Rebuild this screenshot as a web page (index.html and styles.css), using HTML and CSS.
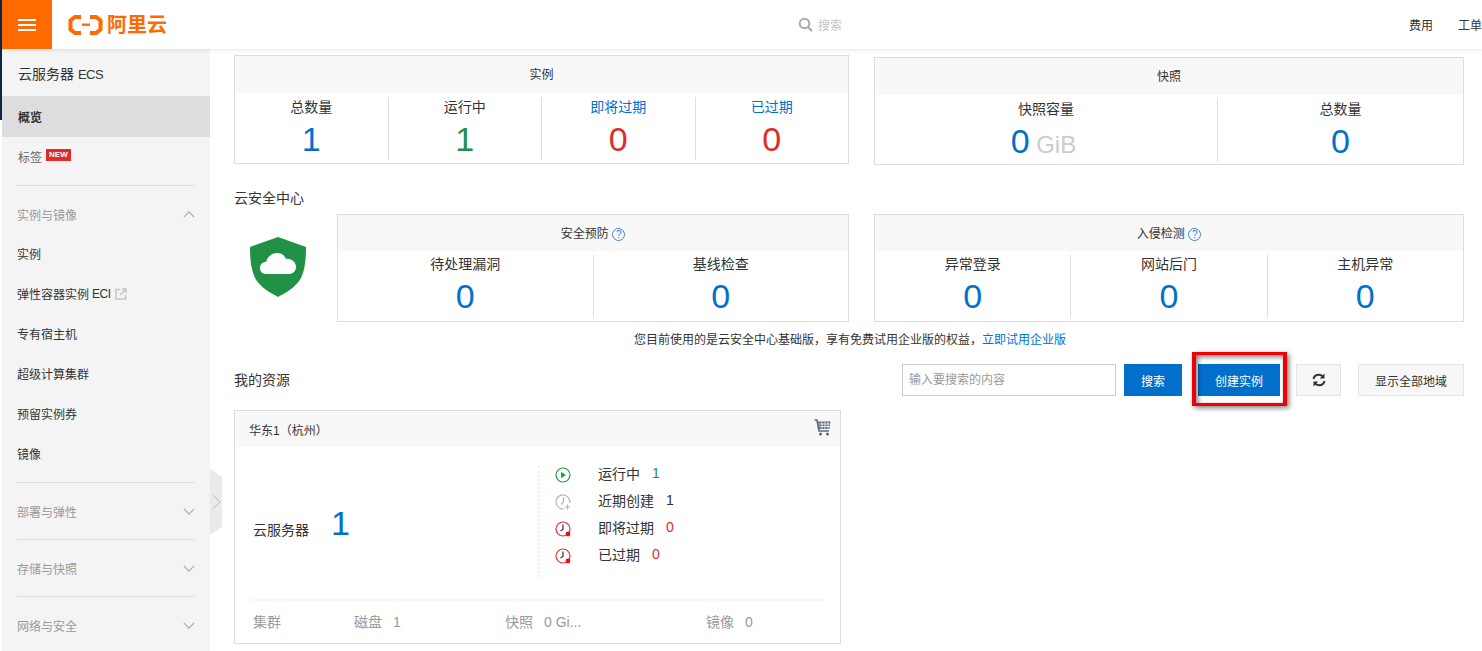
FILE: index.html
```html
<!DOCTYPE html>
<html lang="zh-CN">

<head>
    <meta charset="UTF-8">
    <title>云服务器管理控制台</title>
    <link rel="stylesheet" href="styles.css">
</head>

<body>
    <div class="edge-strip"></div>

    <div class="app">
        <header class="topbar">
            <a class="menu-btn"><span></span><span></span><span></span></a>
            <div class="logo">
                <svg width="35" height="22" viewBox="0 0 35 22">
                    <path d="M13 3H7L2.500 6.500V15.500L7 19H13" fill="none" stroke="#ff6a00" stroke-width="4" />
                    <path d="M22 3H28L32.500 6.500V15.500L28 19H22" fill="none" stroke="#ff6a00" stroke-width="4" />
                    <rect x="14" y="9.500" width="8" height="2.400" fill="#ff6a00" />
                </svg>
                <span>阿里云</span>
            </div>
            <div class="top-search">
                <svg width="15" height="15" viewBox="0 0 15 15">
                    <circle cx="6.500" cy="6.500" r="4.800" fill="none" stroke="#aaa" stroke-width="2" />
                    <path d="M10 10L14 14" stroke="#aaa" stroke-width="2.200" />
                </svg>
                <span>搜索</span>
            </div>
            <nav class="top-links">
                <a>费用</a>
                <a>工单</a>
            </nav>
        </header>

        <div class="body-row">
            <aside class="sidebar">
                <div class="side-title">云服务器 <span class="latin">ECS</span></div>
                <a class="side-item active">概览</a>
                <a class="side-item muted">标签<em class="new-tag">NEW</em></a>

                <div class="side-group open">
                    <div class="group-head">实例与镜像
                        <svg class="chev" width="12" height="7" viewBox="0 0 14 8"><path d="M1 7L7 1L13 7" /></svg>
                    </div>
                    <a class="side-item">实例</a>
                    <a class="side-item">弹性容器实例 <span class="latin">ECI</span>
                        <svg class="ext" width="12" height="12" viewBox="0 0 12 12">
                            <path d="M5 1.500H1V11H10.500V7" fill="none" stroke="#c4c4c4" stroke-width="1.500" />
                            <path d="M5 7L10 2M7 1H11V5" fill="none" stroke="#c4c4c4" stroke-width="1.500" />
                        </svg>
                    </a>
                    <a class="side-item">专有宿主机</a>
                    <a class="side-item">超级计算集群</a>
                    <a class="side-item">预留实例券</a>
                    <a class="side-item">镜像</a>
                </div>

                <div class="side-group">
                    <div class="group-head">部署与弹性
                        <svg class="chev" width="12" height="7" viewBox="0 0 14 8"><path d="M1 1L7 7L13 1" /></svg>
                    </div>
                </div>
                <div class="side-group">
                    <div class="group-head">存储与快照
                        <svg class="chev" width="12" height="7" viewBox="0 0 14 8"><path d="M1 1L7 7L13 1" /></svg>
                    </div>
                </div>
                <div class="side-group">
                    <div class="group-head">网络与安全
                        <svg class="chev" width="12" height="7" viewBox="0 0 14 8"><path d="M1 1L7 7L13 1" /></svg>
                    </div>
                </div>

                <div class="side-toggle">
                    <svg width="9" height="16" viewBox="0 0 9 16"><path d="M1 1L8 8L1 15" fill="none" stroke="#bbb" /></svg>
                </div>
            </aside>

            <main class="content">
                <div class="panel-row first-row">
                    <section class="panel panel-left">
                        <div class="panel-head">实例</div>
                        <div class="stats">
                            <div class="stat"><p>总数量</p><b class="blue">1</b></div>
                            <div class="stat"><p>运行中</p><b class="green">1</b></div>
                            <div class="stat"><p class="link">即将过期</p><b class="red">0</b></div>
                            <div class="stat"><p class="link">已过期</p><b class="red">0</b></div>
                        </div>
                    </section>
                    <section class="panel panel-right">
                        <div class="panel-head">快照</div>
                        <div class="stats">
                            <div class="stat wide"><p>快照容量</p><b class="blue">0 <i class="unit">GiB</i></b></div>
                            <div class="stat"><p>总数量</p><b class="blue">0</b></div>
                        </div>
                    </section>
                </div>

                <h3 class="section-title">云安全中心</h3>
                <div class="panel-row sec-row">
                    <div class="security-wrap">
                        <div class="shield">
                            <svg width="58" height="60" viewBox="0 0 58 60">
                                <path d="M29 0L57 10C57 22 56 33 52 41C47 50 38 55 29 60C20 55 11 50 6 41C2 33 1 22 1 10Z" fill="#219245" />
                                <path d="M17 37C12 37 11 33 11 31C11 27 14 25 17 25C18 20 23 16 28 16C33 16 36 19 37 22C42 21 47 25 47 30C47 34 44 37 40 37Z" fill="#fff" />
                            </svg>
                        </div>
                        <section class="panel panel-sec">
                            <div class="panel-head">安全预防 <span class="help">?</span></div>
                            <div class="stats">
                                <div class="stat"><p>待处理漏洞</p><b class="blue">0</b></div>
                                <div class="stat"><p>基线检查</p><b class="blue">0</b></div>
                            </div>
                        </section>
                    </div>
                    <section class="panel panel-right">
                        <div class="panel-head">入侵检测 <span class="help">?</span></div>
                        <div class="stats">
                            <div class="stat"><p>异常登录</p><b class="blue">0</b></div>
                            <div class="stat"><p>网站后门</p><b class="blue">0</b></div>
                            <div class="stat"><p>主机异常</p><b class="blue">0</b></div>
                        </div>
                    </section>
                </div>
                <p class="notice">您目前使用的是云安全中心基础版，享有免费试用企业版的权益，<a>立即试用企业版</a></p>

                <div class="res-bar">
                    <h3 class="section-title">我的资源</h3>
                    <div class="res-tools">
                        <input class="res-input" type="text" placeholder="输入要搜索的内容">
                        <button class="btn btn-primary">搜索</button>
                        <span class="highlight"><button class="btn btn-primary btn-create">创建实例</button></span>
                        <button class="btn btn-icon">
                            <svg width="14" height="14" viewBox="0 0 14 14">
                                <path d="M1.500 6C2 3.500 4 1.800 7 1.800C9 1.800 10.500 2.800 11.300 4" fill="none" stroke="#333" stroke-width="2" />
                                <path d="M12.500 0.500V5.500H7.800Z" fill="#333" />
                                <path d="M12.500 8C12 10.500 10 12.200 7 12.200C5 12.200 3.500 11.200 2.700 10" fill="none" stroke="#333" stroke-width="2" />
                                <path d="M1.500 13.500V8.500H6.200Z" fill="#333" />
                            </svg>
                        </button>
                        <button class="btn btn-regions">显示全部地域</button>
                    </div>
                </div>

                <section class="panel region">
                    <div class="panel-head region-head">
                        <span>华东1（杭州）</span>
                        <svg width="17" height="17" viewBox="0 0 17 17">
                            <path d="M0.500 1H3L5 12H15" fill="none" stroke="#5a6a80" stroke-width="1.600" />
                            <path d="M4 2.500H16.500L15.500 10H5.200Z" fill="#5a6a80" />
                            <path d="M5 5H16M5.500 7.500H16M8 3V10M11 3V10M14 3V10" stroke="#fff" stroke-width=".8" />
                            <circle cx="6.500" cy="15" r="1.500" fill="#5a6a80" />
                            <circle cx="13.500" cy="15" r="1.500" fill="#5a6a80" />
                        </svg>
                    </div>
                    <div class="region-main">
                        <div class="ecs-count">
                            <span>云服务器</span>
                            <b class="blue">1</b>
                        </div>
                        <ul class="status-list">
                            <li>
                                <svg width="16" height="16" viewBox="0 0 16 16">
                                    <circle cx="8" cy="8" r="7" fill="none" stroke="#22a045" stroke-width="1.200" />
                                    <path d="M6 4.800L11 8L6 11.200Z" fill="#22a045" />
                                </svg>
                                <span>运行中</span><em class="green">1</em>
                            </li>
                            <li>
                                <svg width="16" height="16" viewBox="0 0 16 16">
                                    <path d="M9 14.900A7 7 0 1 1 14.900 9" fill="none" stroke="#b4b4b4" stroke-width="1.200" />
                                    <path d="M8.500 3.500V8L6 10.500M10 13H15M12.500 10.500V15.500" fill="none" stroke="#b4b4b4" stroke-width="1.200" />
                                </svg>
                                <span>近期创建</span><em class="dark">1</em>
                            </li>
                            <li>
                                <svg width="16" height="16" viewBox="0 0 16 16">
                                    <circle cx="8" cy="8" r="7" fill="none" stroke="#e8313a" stroke-width="1.200" />
                                    <path d="M8 3.500V8.500L5.500 10" fill="none" stroke="#333" stroke-width="1.200" />
                                    <circle cx="13" cy="13" r="2.400" fill="#e8101a" />
                                </svg>
                                <span>即将过期</span><em class="red">0</em>
                            </li>
                            <li>
                                <svg width="16" height="16" viewBox="0 0 16 16">
                                    <circle cx="8" cy="8" r="7" fill="none" stroke="#e8313a" stroke-width="1.200" />
                                    <path d="M8 3.500V8.500L5.500 10" fill="none" stroke="#333" stroke-width="1.200" />
                                    <circle cx="13" cy="13" r="2.400" fill="#e8101a" />
                                </svg>
                                <span>已过期</span><em class="red">0</em>
                            </li>
                        </ul>
                    </div>
                    <div class="region-foot">
                        <div class="foot-item w1">集群</div>
                        <div class="foot-item w2">磁盘<em>1</em></div>
                        <div class="foot-item w3">快照<em>0 Gi...</em></div>
                        <div class="foot-item">镜像<em>0</em></div>
                    </div>
                </section>
            </main>
        </div>
    </div>
</body>

</html>
```

FILE: styles.css
```css
* {
    margin: 0;
    padding: 0;
    box-sizing: border-box;
    font-family: "Liberation Sans", "Noto Sans CJK SC", sans-serif;
}

:root {
    --orange: #ff6a00;
    --blue: #0070cc;
    --green: #1f8f4a;
    --red: #e12b2b;
    --border: #dddddd;
    --head-bg: #f8f8f8;
    --text: #333333;
}

html,
body {
    height: 651px;
    overflow: hidden;
    background: #fff;
    color: var(--text);
    font-size: 12px;
}

.edge-strip {
    position: absolute;
    left: 0;
    top: 0;
    width: 2px;
    height: 120px;
    background: #0d2547;
}

.app {
    margin-left: 2px;
}

/* top bar */
.topbar {
    height: 49px;
    display: flex;
    align-items: center;
    background: #fff;
    box-shadow: 0 1px 4px rgba(0, 0, 0, 0.1);
    position: relative;
    z-index: 2;
}

.menu-btn {
    width: 50px;
    height: 49px;
    background: var(--orange);
    display: flex;
    flex-direction: column;
    align-items: center;
    justify-content: center;
    gap: 3px;
}

.menu-btn span {
    width: 18px;
    height: 2px;
    background: #fff;
}

.logo {
    display: flex;
    align-items: center;
    gap: 4px;
    margin-left: 16px;
    width: 100px;
    color: var(--orange);
    font-size: 20px;
    font-weight: bold;
    line-height: 24px;
    white-space: nowrap;
}

.logo svg {
    flex-shrink: 0;
}

.top-search {
    margin-left: 630px;
    display: flex;
    align-items: center;
    gap: 5px;
    color: #c4c4c4;
}

.top-links {
    margin-left: auto;
    display: flex;
    gap: 25px;
    font-size: 12px;
    width: 73px;
    flex-shrink: 0;
    white-space: nowrap;
}

/* sidebar */
.body-row {
    display: flex;
}

.sidebar {
    width: 208px;
    height: 602px;
    background: #f4f4f4;
    position: relative;
    flex-shrink: 0;
}

.latin {
    font-size: 13px;
    letter-spacing: -0.5px;
}

.side-title {
    height: 47px;
    padding-left: 16px;
    line-height: 50px;
    font-size: 14px;
}

.side-item {
    display: flex;
    align-items: center;
    height: 40px;
    padding-left: 16px;
    padding-bottom: 1px;
    gap: 4px;
    font-size: 12px;
    color: var(--text);
}

.side-item.active {
    height: 41px;
    background: #dddddd;
    font-weight: bold;
}

.side-item.muted {
    color: #666;
}

.side-item .latin {
    font-size: 12px;
    margin-left: -1px;
}

.new-tag {
    background: #e12b2b;
    color: #fff;
    font-style: normal;
    font-size: 8px;
    font-weight: bold;
    line-height: 12px;
    padding: 0 3px;
    margin-bottom: 3px;
}

.side-group {
    margin: 0 15px;
    height: 57px;
    border-top: 1px solid var(--border);
}

.side-group.open {
    margin-top: 8px;
    height: 297px;
}

.side-group .side-item {
    margin-left: -15px;
    padding-left: 15px;
    margin-right: -15px;
}

.group-head {
    display: flex;
    justify-content: space-between;
    align-items: center;
    height: 56px;
    color: #999;
    font-size: 12px;
}

.open .group-head {
    height: 48px;
    padding-top: 9px;
}

.chev path {
    fill: none;
    stroke: #aaa;
    stroke-width: 1.400;
}

.side-toggle {
    position: absolute;
    left: 100%;
    top: 420px;
    width: 12px;
    height: 66px;
    background: #eaeaea;
    clip-path: polygon(0 0, 100% 12%, 100% 88%, 0 100%);
    display: flex;
    align-items: center;
    justify-content: center;
}

/* main */
.content {
    width: 1230px;
    margin-left: 24px;
    padding-top: 6px;
    flex-shrink: 0;
}

.panel-row {
    display: flex;
    justify-content: space-between;
}

.panel {
    border: 1px solid var(--border);
    background: #fff;
}

.panel-left {
    width: 615px;
    height: 109px;
}

.panel-right {
    width: 590px;
}

.first-row .panel-right {
    height: 108px;
    margin-top: 2px;
}

.panel-head {
    height: 37px;
    background: var(--head-bg);
    text-align: center;
    line-height: 38px;
    font-size: 12px;
}

.stats {
    display: flex;
    margin-top: 4px;
}

.stat {
    flex: 1;
    height: 63px;
    text-align: center;
    border-left: 1px solid var(--border);
}

.stat:first-child {
    border-left: 0;
}

.stat.wide {
    flex: 0 0 342px;
}

.stat p {
    font-size: 14px;
    line-height: 20px;
}

.stat p.link {
    color: var(--blue);
}

.stat b {
    display: block;
    font-weight: normal;
    font-size: 34px;
    line-height: 36px;
    margin-top: 4px;
}

.stat.wide b {
    padding-right: 5px;
}

.sec-row .panel-head {
    height: 36px;
}

.sec-row .stat {
    height: 62px;
}

.sec-row .stat p {
    margin-top: -1px;
}

.unit {
    color: #cccccc;
    font-style: normal;
    font-size: 24px;
    margin-left: -3px;
}

.blue {
    color: var(--blue);
}

.green {
    color: var(--green);
}

.red {
    color: var(--red);
}

.dark {
    color: var(--text);
}

.section-title {
    font-size: 14px;
    font-weight: normal;
    line-height: 20px;
}

.first-row + .section-title {
    margin: 23px 0 6px;
}

.security-wrap {
    display: flex;
    width: 615px;
}

.shield {
    width: 103px;
    padding: 23px 0 0 15px;
    flex-shrink: 0;
}

.panel-sec {
    flex: 1;
    height: 108px;
}

.help {
    display: inline-block;
    width: 13px;
    height: 13px;
    border: 1px solid #3a86d0;
    border-radius: 50%;
    color: #3a86d0;
    font-size: 10px;
    line-height: 11px;
    text-align: center;
}

.notice {
    text-align: center;
    margin-top: 9px;
    line-height: 18px;
    padding-left: 2px;
}

.notice a {
    color: var(--blue);
}

.res-bar {
    display: flex;
    justify-content: space-between;
    align-items: center;
    height: 50px;
    margin-top: 6px;
}

.res-tools {
    display: flex;
    align-items: center;
}

.res-input {
    width: 214px;
    height: 32px;
    border: 1px solid #cccccc;
    padding: 0 6px;
    font-size: 12px;
    margin-right: 8px;
}

.res-input::placeholder {
    color: #999;
}

.btn {
    height: 32px;
    border: 1px solid #e4e4e4;
    background: #f7f7f7;
    font-size: 12px;
    color: var(--text);
    display: flex;
    align-items: center;
    justify-content: center;
}

.btn-primary {
    background: var(--blue);
    border-color: var(--blue);
    color: #fff;
    width: 58px;
}

.btn-create {
    width: 82px;
}

.btn-icon {
    width: 45px;
    margin-right: 17px;
}

.btn-regions {
    width: 106px;
}

/* red annotation box drawn over the button */
.highlight {
    display: block;
    position: relative;
    margin: 0 16px;
}

.highlight::after {
    content: "";
    position: absolute;
    left: -6px;
    right: -7px;
    top: -12px;
    bottom: -10px;
    border: solid #f00000;
    border-width: 3px 4px;
    box-shadow: 2px 2px 5px rgba(0, 0, 0, 0.5), inset 2px 2px 5px rgba(0, 0, 0, 0.5);
}

/* region card */
.region {
    width: 607px;
    height: 234px;
    margin-top: 5px;
    font-size: 14px;
}

.region-head {
    display: flex;
    justify-content: space-between;
    align-items: center;
    height: 36px;
    padding: 0 9px 0 14px;
    font-size: 12px;
}

.region-head span {
    padding-top: 3px;
}

.region-head svg {
    margin-bottom: 4px;
}

.region-main {
    display: flex;
    height: 152px;
}

.ecs-count {
    width: 303px;
    padding-left: 18px;
    display: flex;
    align-items: center;
    gap: 22px;
    font-size: 14px;
}

.ecs-count span {
    padding-top: 11px;
}

.ecs-count b {
    font-size: 34px;
    font-weight: normal;
    line-height: 36px;
}

.status-list {
    list-style: none;
    margin-top: 19px;
    height: 111px;
    padding-left: 15px;
    border-left: 2px dotted #eeeeee;
}

.status-list li {
    display: flex;
    align-items: center;
    height: 27px;
    font-size: 14px;
}

.status-list li:first-child {
    margin-top: -7px;
}

.status-list svg {
    margin-right: 27px;
    margin-top: 4px;
}

.status-list em {
    font-style: normal;
    margin-left: 12px;
}

.region-foot {
    display: flex;
    margin: 0 17px;
    border-top: 2px dotted #eeeeee;
    height: 41px;
    padding-left: 1px;
    align-items: center;
    color: #999;
    font-size: 14px;
}

.foot-item {
    white-space: nowrap;
}

.foot-item em {
    font-style: normal;
    margin-left: 11px;
}

.w1 {
    width: 101px;
}

.w2 {
    width: 151px;
}

.w3 {
    width: 201px;
}
```
